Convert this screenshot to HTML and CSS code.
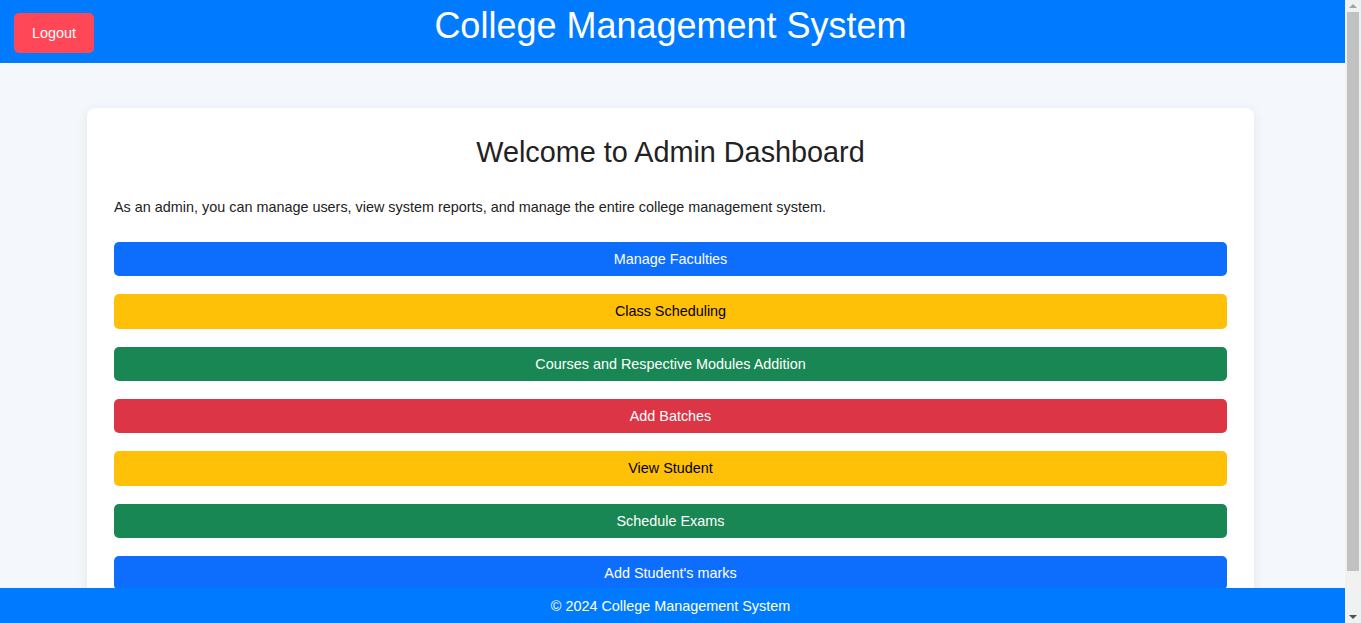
FILE: index.html
```html
<!DOCTYPE html>
<html lang="en">
<head>
<meta charset="utf-8">
<title>Admin Dashboard</title>
<link rel="stylesheet" href="styles.css">
</head>
<body>
<header class="topbar">
  <div class="topbar-left"><button class="logout">Logout</button></div>
  <h1 class="brand">College Management System</h1>
  <div></div>
</header>
<div class="page">
  <main class="card">
    <h2 class="card-title">Welcome to Admin Dashboard</h2>
    <p class="intro">As an admin, you can manage users, view system reports, and manage the entire college management system.</p>
    <div class="actions">
      <button class="btn btn-blue">Manage Faculties</button>
      <button class="btn btn-yellow">Class Scheduling</button>
      <button class="btn btn-green">Courses and Respective Modules Addition</button>
      <button class="btn btn-red">Add Batches</button>
      <button class="btn btn-yellow">View Student</button>
      <button class="btn btn-green">Schedule Exams</button>
      <button class="btn btn-blue">Add Student's marks</button>
    </div>
  </main>
</div>
<footer class="footer">© 2024 College Management System</footer>
<div class="scrollbar" aria-hidden="true">
  <span class="sb-arrow sb-up"></span>
  <span class="sb-thumb"></span>
  <span class="sb-arrow sb-down"></span>
</div>
</body>
</html>
```

FILE: styles.css
```css
* { box-sizing: border-box; }
html, body { margin: 0; padding: 0; }
::-webkit-scrollbar { width: 0; height: 0; }
body {
  font-family: "Liberation Sans", Arial, sans-serif;
  background: #f4f7fb;
  color: #333;
  font-size: 14.4px;
  margin-right: 16px;
}
.topbar {
  background: #007bff;
  height: 63px;
  display: grid;
  grid-template-columns: 1fr auto 1fr;
  align-items: start;
  padding-right: 4px;
}
.topbar-left { padding: 13px 0 0 14px; }
.logout {
  width: 80px;
  height: 40px;
  border: none;
  border-radius: 5px;
  background: #ff4757;
  color: #fff;
  font-family: inherit;
  font-size: 14.4px;
  cursor: pointer;
}
.brand {
  margin: 0;
  padding-top: 5px;
  font-size: 36px;
  font-weight: normal;
  color: #fff;
  line-height: 41px;
}
.page { padding-right: 4px; }
.card {
  width: 1167px;
  margin: 45px auto 50px;
  background: #fff;
  border-radius: 8px;
  box-shadow: 0 2px 12px rgba(0, 0, 0, 0.08);
  padding: 28px 27px 27px;
}
.card-title {
  margin: 0;
  text-align: center;
  font-size: 28.8px;
  font-weight: normal;
  line-height: 33px;
  color: #222;
}
.intro {
  margin: 30px 0 26px;
  line-height: 17px;
  color: #222;
}
.actions {
  display: flex;
  flex-direction: column;
  gap: 18px;
}
.btn {
  height: 34.33px;
  border: none;
  border-radius: 5px;
  font-family: inherit;
  font-size: 14.4px;
  color: #fff;
  cursor: pointer;
}
.btn-blue { background: #0d6efd; }
.btn-yellow { background: #ffc107; color: #000; }
.btn-green { background: #198754; }
.btn-red { background: #dc3545; }
.footer {
  position: fixed;
  left: 0;
  right: 16px;
  bottom: 0;
  height: 35px;
  background: #007bff;
  color: #fff;
  font-size: 14.4px;
  display: flex;
  align-items: center;
  justify-content: center;
  padding-right: 4px;
}
.scrollbar {
  position: fixed;
  top: 0;
  right: 0;
  bottom: 0;
  width: 16px;
  background: #f1f1f1;
  display: flex;
  flex-direction: column;
  align-items: center;
}
.sb-arrow {
  flex: 0 0 12px;
  width: 16px;
  display: flex;
  justify-content: center;
  align-items: center;
}
.sb-arrow::before {
  content: "";
  width: 0;
  height: 0;
  border-left: 4px solid transparent;
  border-right: 4px solid transparent;
}
.sb-up::before { border-bottom: 4px solid #a3a3a3; }
.sb-down::before { border-top: 4px solid #505050; }
.sb-thumb {
  width: 12px;
  height: 559px;
  background: #c1c1c1;
}
.sb-down { margin-top: auto; }
```
